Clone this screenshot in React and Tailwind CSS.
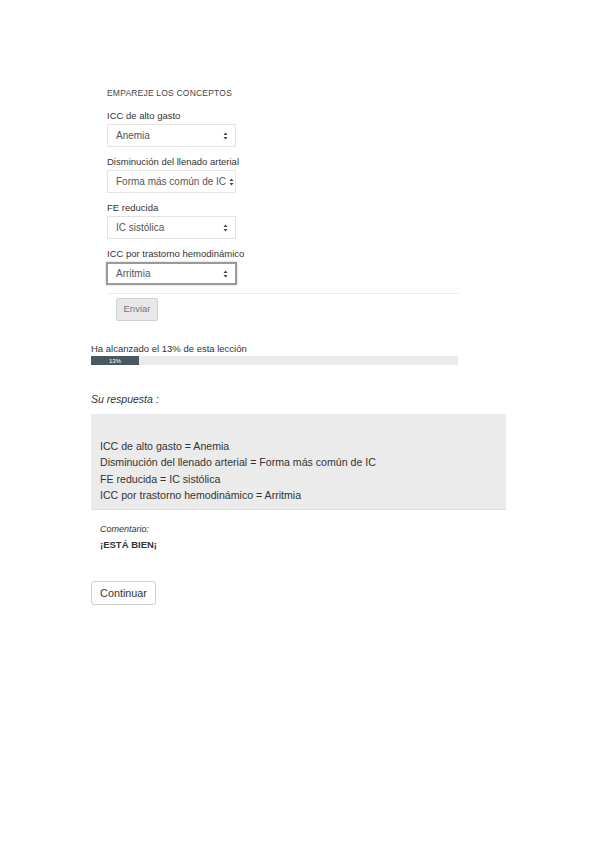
const CONCEPTS = [
  { label: 'ICC de alto gasto', value: 'Anemia' },
  { label: 'Disminución del llenado arterial', value: 'Forma más común de IC' },
  { label: 'FE reducida', value: 'IC sistólica' },
  { label: 'ICC por trastorno hemodinámico', value: 'Arritmia', focused: true },
]

function Arrows() {
  return (
    <svg width="5" height="8" viewBox="0 0 5 8" className="shrink-0">
      <path d="M2.5 0.5L4.5 3H0.5z M2.5 7.5L4.5 5H0.5z" fill="#444" />
    </svg>
  )
}

function FakeSelect({ value, focused }) {
  return (
    <div
      className={`flex h-[23px] items-center justify-between gap-[3px] bg-white pl-[8px] pr-[7px] text-[10px] text-[#555] ${
        focused
          ? 'ml-[-1px] w-[131px] border-2 border-[#9a9a9a] shadow-[0_0_2px_rgba(0,0,0,0.25)]'
          : 'w-[129px] border border-[#e4e4e4]'
      }`}
    >
      <span className="whitespace-nowrap">{value}</span>
      <Arrows />
    </div>
  )
}

export default function App() {
  return (
    <div className="min-h-[848px] bg-white pl-[91px] pt-[86px] font-['Liberation_Sans',Arial,sans-serif] text-[#333]">
      <div className="pl-[16px]">
        <div className="text-[8.5px] leading-[14px] tracking-[0.2px] text-[#444]">EMPAREJE LOS CONCEPTOS</div>
        <div className="mt-[9px]">
          {CONCEPTS.map((c) => (
            <div key={c.label} className="mb-[8px]">
              <div className="mb-[1px] text-[9.5px] leading-[14px]">{c.label}</div>
              <FakeSelect value={c.value} focused={c.focused} />
            </div>
          ))}
        </div>
        <div className="mt-[3px] w-[351px] border-t border-[#ececec]" />
        <button
          type="button"
          className="ml-[9px] mt-[4px] h-[23px] w-[42px] rounded-[2px] border border-[#d0d0d0] bg-[#e8e8e8] text-[9.5px] text-[#777]"
        >
          Enviar
        </button>
      </div>

      <div className="mt-[21px] text-[9.5px] leading-[14px]">Ha alcanzado el 13% de esta lección</div>
      <div className="h-[9px] w-[367px] bg-[#ebebeb]">
        <div className="flex h-full w-[48px] items-center justify-center bg-[#4a5961] text-[6px] leading-none text-white">
          13%
        </div>
      </div>

      <div className="mt-[27px] text-[10.5px] italic leading-[14px]">Su respuesta :</div>
      <div className="mt-[8px] h-[96px] w-[415px] border-b border-[#dcdcdc] bg-[#ebebeb] pl-[9px] pt-[24px] text-[10.6px] leading-[16.3px] text-[#333]">
        <div>ICC de alto gasto = Anemia</div>
        <div>Disminución del llenado arterial = Forma más común de IC</div>
        <div>FE reducida = IC sistólica</div>
        <div>ICC por trastorno hemodinámico = Arritmia</div>
      </div>

      <div className="mt-[11px] pl-[9px] text-[9.5px] leading-[16px] text-[#333]">
        <div className="text-[9px] italic">Comentario:</div>
        <div className="font-bold">¡ESTÁ BIEN¡</div>
      </div>

      <button
        type="button"
        className="mt-[28px] h-[24px] w-[65px] rounded-[3px] border border-[#cfcfcf] bg-white text-[10.8px] text-[#333]"
      >
        Continuar
      </button>
    </div>
  )
}
